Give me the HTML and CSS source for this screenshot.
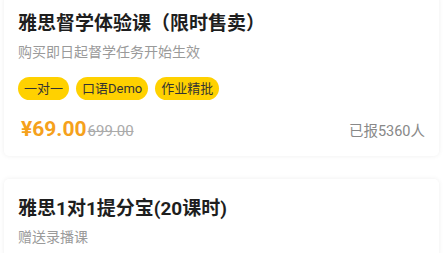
FILE: index.html
```html
<!DOCTYPE html>
<html lang="zh">
<head>
    <meta charset="UTF-8">
    <meta name="viewport" content="width=device-width, initial-scale=1.0">
    <title>课程列表</title>
    <link rel="stylesheet" href="styles.css">
</head>
<body>
    <div class="course-list">
        <div class="course-card">
            <div class="course-title">雅思督学体验课（限时售卖）</div>
            <div class="course-desc">购买即日起督学任务开始生效</div>
            <div class="tag-row">
                <span class="tag">一对一</span>
                <span class="tag">口语Demo</span>
                <span class="tag">作业精批</span>
            </div>
            <div class="price-row">
                <div class="price">
                    <span class="price-now">¥69.00</span>
                    <span class="price-old">699.00</span>
                </div>
                <div class="sold">已报5360人</div>
            </div>
        </div>

        <div class="course-card">
            <div class="course-title">雅思1对1提分宝(20课时)</div>
            <div class="course-desc">赠送录播课</div>
        </div>
    </div>
</body>
</html>
```

FILE: styles.css
```css
body {
    margin: 0;
    background: #fff;
    font-family: Roboto, "Noto Sans CJK SC", sans-serif;
    color: #222;
    overflow: hidden;
}

.course-list {
    display: flex;
    flex-direction: column;
    gap: 23px;
    margin-top: -6px;
    padding: 0 6px 0 4px;
}

.course-card {
    background: #fff;
    border-radius: 5px;
    box-shadow: 0 0 5px rgba(0, 0, 0, 0.07);
    padding: 17px 14px 11px 14px;
}

.course-title {
    font-size: 19px;
    font-weight: bold;
    line-height: 26px;
    color: #1e1e1e;
}

.course-desc {
    margin-top: 5px;
    font-size: 14px;
    line-height: 20px;
    color: #9a9a9a;
}

.tag-row {
    display: flex;
    gap: 7px;
    margin-top: 15px;
}

.tag {
    background: #ffd100;
    color: #333;
    font-size: 13px;
    line-height: 23px;
    height: 23px;
    padding: 0 6px;
    border-radius: 12px;
}

.price-row {
    display: flex;
    justify-content: space-between;
    align-items: baseline;
    margin-top: 16px;
    line-height: 26px;
}

.price-now {
    color: #f5a11c;
    font-size: 21px;
    font-weight: bold;
    padding-left: 3px;
}

.price-old {
    color: #aaa;
    font-size: 15px;
    text-decoration: line-through;
    margin-left: -3px;
}

.sold {
    color: #888;
    font-size: 14.5px;
}
```
